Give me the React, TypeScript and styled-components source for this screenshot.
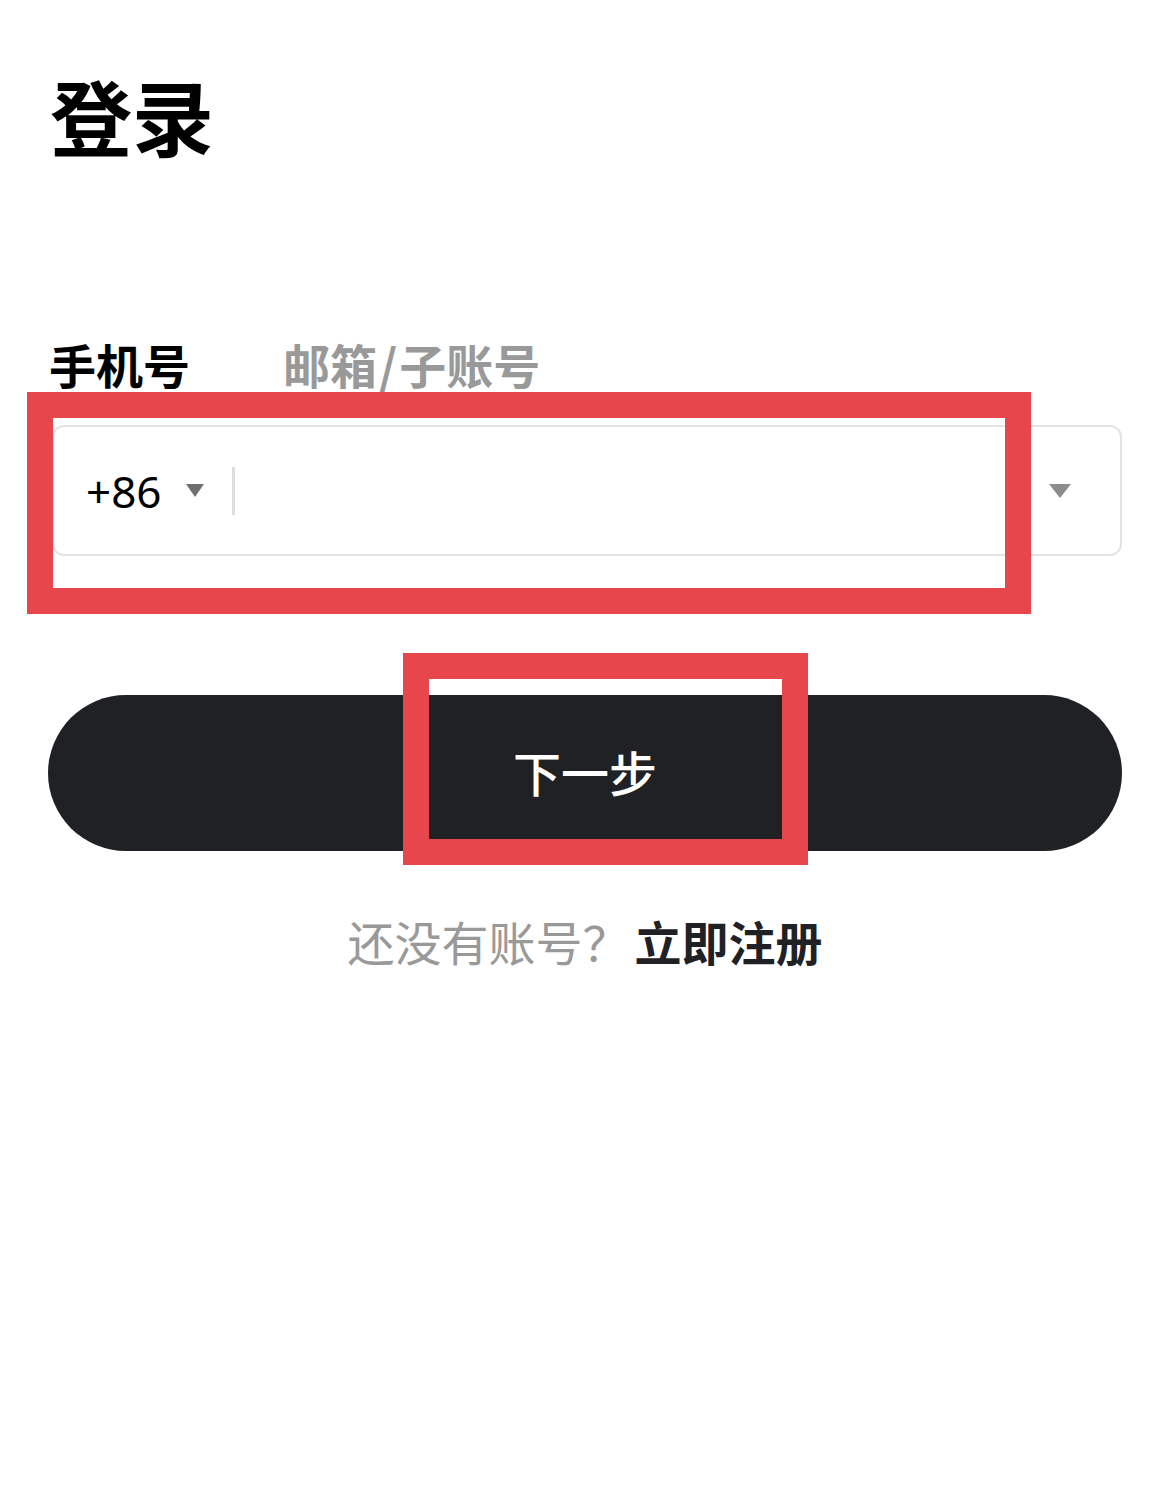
import React from 'react';
import styled, { createGlobalStyle } from 'styled-components';

const GlobalStyle = createGlobalStyle`
    html, body {
        margin: 0;
        padding: 0;
        background: #fff;
    }
    body {
        font-family: "Noto Sans", "Noto Sans CJK SC", sans-serif;
        color: #000;
    }
`

const Page = styled.div`
    width: 1153px;
    min-height: 1506px;
    box-sizing: border-box;
    padding: 74px 31px 0 48px;
`
const Title = styled.h1`
    margin: 0 0 0 2px;
    font-size: 82px;
    line-height: 1;
    font-weight: 700;
    font-family: "Noto Sans CJK SC", sans-serif;
`
const Tabs = styled.div`
    display: flex;
    gap: 93px;
    margin: 184px 0 0 1px;
`
const Tab = styled.div<{ $active?: boolean }>`
    font-family: "Noto Sans CJK SC", sans-serif;
    font-size: 47px;
    line-height: 1;
    font-weight: 700;
    color: ${p => (p.$active ? '#000' : '#999')};
`
const Slash = styled.span`
    padding: 0 2px;
`
const FieldWrap = styled.div`
    position: relative;
    margin: 38px 0 0 4px;
`
const Field = styled.div`
    display: flex;
    align-items: center;
    height: 131px;
    box-sizing: border-box;
    border: 2px solid #e3e3e3;
    border-radius: 12px;
    padding: 0 49px 0 32px;
`
const Code = styled.div`
    display: flex;
    align-items: center;
    font-family: "Noto Sans", sans-serif;
    font-size: 44px;
    line-height: 1;
    color: #000;
`
const Caret = styled.span<{ $w: number; $h: number; $c: string }>`
    display: block;
    width: 0;
    height: 0;
    border-left: ${p => p.$w / 2}px solid transparent;
    border-right: ${p => p.$w / 2}px solid transparent;
    border-top: ${p => p.$h}px solid ${p => p.$c};
`
const CodeCaret = styled.div`
    margin-left: 24px;
`
const Divider = styled.div`
    width: 3px;
    height: 48px;
    background: #ddd;
    margin-left: 28px;
`
const PhoneInput = styled.input`
    flex: 1;
    height: 100%;
    border: none;
    outline: none;
    background: transparent;
    font-size: 44px;
    padding-left: 20px;
`
const Mark = styled.div<{ $top: number; $left: number; $w: number; $h: number }>`
    position: absolute;
    top: ${p => p.$top}px;
    left: ${p => p.$left}px;
    width: ${p => p.$w}px;
    height: ${p => p.$h}px;
    box-sizing: border-box;
    border: 26px solid #e8464d;
    pointer-events: none;
`
const ButtonWrap = styled.div`
    position: relative;
    margin-top: 139px;
`
const NextButton = styled.button`
    display: flex;
    justify-content: center;
    align-items: center;
    width: 1074px;
    height: 156px;
    border: none;
    border-radius: 78px;
    background: #1f2124;
    color: #fff;
    font-family: "Noto Sans CJK SC", sans-serif;
    font-size: 48px;
    font-weight: 500;
    padding: 0 0 4px;
`
const SignUp = styled.div`
    margin-top: 66px;
    text-align: center;
    width: 1074px;
    font-family: "Noto Sans CJK SC", sans-serif;
    font-size: 47px;
    line-height: 1;
    color: #999;
    b {
        color: #1f2124;
        font-weight: 700;
        margin-left: 5px;
    }
`

const App = (): JSX.Element => {
    return (
        <Page>
            <GlobalStyle />
            <Title>登录</Title>
            <Tabs>
                <Tab $active>手机号</Tab>
                <Tab>邮箱<Slash>/</Slash>子账号</Tab>
            </Tabs>
            <FieldWrap>
                <Field>
                    <Code>
                        +86
                        <CodeCaret>
                            <Caret $w={18} $h={13} $c="#707070" />
                        </CodeCaret>
                    </Code>
                    <Divider />
                    <PhoneInput type="tel" />
                    <Caret $w={22} $h={14} $c="#8c8c8c" />
                </Field>
                <Mark $top={-33} $left={-25} $w={1004} $h={222} />
            </FieldWrap>
            <ButtonWrap>
                <NextButton>下一步</NextButton>
                <Mark $top={-42} $left={355} $w={405} $h={212} />
            </ButtonWrap>
            <SignUp>
                还没有账号？<b>立即注册</b>
            </SignUp>
        </Page>
    )
}

export default App
